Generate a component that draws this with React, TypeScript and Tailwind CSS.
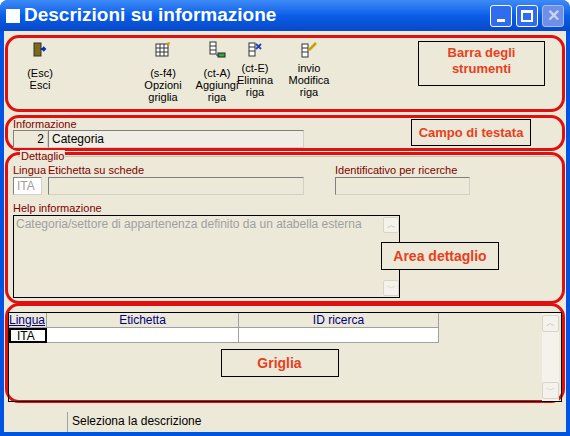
import React from 'react'

const font = { fontFamily: '"Liberation Sans", Arial, sans-serif' }

function Note({ text, className }: { text: string; className: string }) {
  return (
    <div className={`flex items-center justify-center border border-black bg-[#ece9d8] text-center text-[13px] font-bold leading-[16px] text-[#e8401c] ${className}`}>
      {text}
    </div>
  )
}

function Field({ className, children }: { className: string; children?: React.ReactNode }) {
  return (
    <div className={`h-[18px] border border-t-[#808080] border-l-[#808080] border-r-[#d4d0c8] border-b-[#d4d0c8] bg-[#ece9d8] px-[3px] text-[12px] leading-[16px] ${className}`}>
      {children}
    </div>
  )
}

function Tool({ icon, lines, className, gap }: { icon: React.ReactNode; lines: string[]; className: string; gap: string }) {
  return (
    <div className={`flex flex-col items-center ${className}`}>
      <div className="h-[18px] w-[18px]">{icon}</div>
      <div className={`text-center text-[11px] leading-[12px] text-black ${gap}`}>
        {lines.map((l) => (
          <div key={l}>{l}</div>
        ))}
      </div>
    </div>
  )
}

const Door = (
  <svg viewBox="0 0 18 18" className="h-[18px] w-[18px]">
    <rect x="3" y="2" width="7" height="13" fill="#7a6a1a" stroke="#333" strokeWidth="1" />
    <path d="M10 8h4M12 6l2 2-2 2" stroke="#0030c0" strokeWidth="2" fill="none" />
  </svg>
)
const Grid = (
  <svg viewBox="0 0 18 18" className="h-[18px] w-[18px]">
    <rect x="2" y="3" width="12" height="12" fill="#fff" stroke="#333" />
    <path d="M2 7h12M2 11h12M6 3v12M10 3v12" stroke="#333" />
    <path d="M12 2l4 -1-1 4z" fill="#c8a000" />
  </svg>
)
const Add = (
  <svg viewBox="0 0 18 18" className="h-[18px] w-[18px]">
    <rect x="2" y="1" width="6" height="12" fill="#fff" stroke="#333" />
    <path d="M2 5h6M2 9h6" stroke="#333" />
    <rect x="10" y="12" width="7" height="4" fill="#3a3" stroke="#222" />
    <path d="M8 14h3" stroke="#0030c0" />
  </svg>
)
const Del = (
  <svg viewBox="0 0 18 18" className="h-[18px] w-[18px]">
    <rect x="3" y="2" width="6" height="13" fill="#fff" stroke="#333" />
    <path d="M3 6h6M3 10h6" stroke="#333" />
    <path d="M10 3l5 5M15 3l-5 5" stroke="#2040c0" strokeWidth="1.8" />
  </svg>
)
const Edit = (
  <svg viewBox="0 0 18 18" className="h-[18px] w-[18px]">
    <rect x="2" y="3" width="6" height="13" fill="#fff" stroke="#333" />
    <path d="M2 7h6M2 11h6" stroke="#333" />
    <path d="M9 9l7-7" stroke="#c8a000" strokeWidth="2.5" />
  </svg>
)

export default function App() {
  return (
    <div style={font} className="h-[436px] w-[570px] overflow-hidden rounded-t-[8px] bg-[#0054e3]">
      <div className="flex h-[31px] items-center bg-gradient-to-b from-[#3d8bf7] via-[#0a5ee8] to-[#0848c8] px-[6px]">
        <div className="mr-[4px] h-[14px] w-[14px] bg-white" />
        <div className="text-[19px] font-bold text-white">Descrizioni su informazione</div>
        <div className="ml-auto flex gap-[4px]">
          <div className="flex h-[22px] w-[22px] items-end justify-center rounded-[3px] border border-white bg-[#2f6cf0] pb-[4px]"><div className="h-[3px] w-[8px] bg-white" /></div>
          <div className="flex h-[22px] w-[22px] items-center justify-center rounded-[3px] border border-white bg-[#2f6cf0]"><div className="h-[12px] w-[12px] border-2 border-t-[3px] border-white" /></div>
          <div className="flex h-[22px] w-[22px] items-center justify-center rounded-[3px] border border-[#a8bef0] bg-[#6e8ee8] text-[16px] font-bold text-[#c8d4f4]">✕</div>
        </div>
      </div>
      <div className="mx-[4px] flex h-[401px] flex-col bg-[#ece9d8] pt-[4px]">
        {/* toolbar */}
        <div className="mx-[1px] flex h-[77px] rounded-[14px] border-[3px] border-[#e01010] pt-[3px]">
          <Tool icon={Door} lines={['(Esc)', 'Esci']} gap="mt-[8px]" className="ml-[17px] w-[30px]" />
          <Tool icon={Grid} lines={['(s-f4)', 'Opzioni', 'griglia']} gap="mt-[8px]" className="ml-[83px] w-[50px]" />
          <Tool icon={Add} lines={['(ct-A)', 'Aggiungi', 'riga']} gap="mt-[8px]" className="ml-[4px] w-[50px]" />
          <Tool icon={Del} lines={['(ct-E)', 'Elimina', 'riga']} gap="mt-[3px]" className="ml-[-12px] w-[50px]" />
          <Tool icon={Edit} lines={['invio', 'Modifica', 'riga']} gap="mt-[3px]" className="ml-[4px] w-[50px]" />
          <Note text="Barra degli strumenti" className="ml-[84px] h-[45px] w-[127px] items-start pt-[3px]" />
        </div>
        {/* header */}
        <div className="mx-[1px] mt-[3px] flex h-[36px] rounded-[14px] border-[3px] border-[#e01010] pl-[5px]">
          <div>
            <div className="text-[11px] leading-[12px] text-[#800000]">Informazione</div>
            <div className="flex">
              <Field className="w-[35px] text-right">2</Field>
              <Field className="w-[256px] bg-[#f0eee4]">Categoria</Field>
            </div>
          </div>
          <Note text="Campo di testata" className="ml-[107px] mt-[1px] h-[27px] w-[120px]" />
        </div>
        {/* detail */}
        <div className="mx-[1px] mt-[1px] h-[152px] rounded-[14px] border-[3px] border-[#e01010] pl-[5px] pt-[1px]">
          <div className="relative ml-[5px] mr-[6px] border-t border-[#c8c4b4]">
            <span className="absolute left-[2px] top-[-7px] bg-[#ece9d8] px-[1px] text-[11px] leading-[12px] text-[#800000]">Dettaglio</span>
          </div>
          <div className="mt-[6px] flex text-[11px] leading-[14px] text-[#800000]">
            <span className="w-[35px]">Lingua</span>
            <span className="w-[287px]">Etichetta su schede</span>
            <span>Identificativo per ricerche</span>
          </div>
          <div className="flex">
            <Field className="w-[29px] bg-white text-[#a0a0a0]">ITA</Field>
            <Field className="ml-[6px] w-[256px]" />
            <Field className="ml-[31px] w-[135px]" />
          </div>
          <div className="mt-[6px] text-[11px] leading-[14px] text-[#800000]">Help informazione</div>
          <div className="flex">
            <div className="flex h-[83px] w-[387px] border border-black bg-[#ece9d8] pl-[2px]">
              <div className="flex-1 text-[12px] leading-[16px] text-[#a0a0a0]">Categoria/settore di appartenenza definito da un atabella esterna</div>
              <div className="flex w-[16px] flex-col justify-between py-[1px]">
                <div className="h-[16px] rounded-[2px] border border-[#d8d4c8] bg-[#f4f2ea] text-center text-[9px] leading-[14px] text-[#b0b0b0]">︿</div>
                <div className="h-[16px] rounded-[2px] border border-[#d8d4c8] bg-[#f4f2ea] text-center text-[9px] leading-[14px] text-[#b0b0b0]">﹀</div>
              </div>
            </div>
            <Note text="Area dettaglio" className="ml-[-19px] mt-[27px] h-[28px] w-[118px] text-[14px]" />
          </div>
        </div>
        {/* grid */}
        <div className="mx-[1px] mt-[-1px] h-[100px] rounded-[14px] border-[3px] border-[#e01010] pt-[6px]">
          <div className="flex h-[90px] border border-black">
            <div className="flex-1">
              <div className="flex h-[15px] text-[12px] leading-[14px] text-[#000080]">
                <div className="w-[38px] border-r border-b border-[#a0a0a0] bg-[#ece9d8] underline">Lingua</div>
                <div className="w-[192px] border-r border-b border-[#a0a0a0] text-center">Etichetta</div>
                <div className="w-[200px] border-r border-b border-[#a0a0a0] text-center">ID ricerca</div>
              </div>
              <div className="flex h-[15px] text-[12px] leading-[12px]">
                <div className="w-[38px] border-2 border-black bg-white pl-[6px]">ITA</div>
                <div className="w-[192px] border-r border-b border-[#a0a0a0] bg-white" />
                <div className="w-[200px] border-r border-b border-[#a0a0a0] bg-white" />
              </div>
              <div className="flex justify-center">
                <Note text="Griglia" className="ml-[8px] mt-[6px] h-[28px] w-[118px] text-[14px]" />
              </div>
            </div>
            <div className="mr-[2px] flex w-[17px] flex-col justify-between bg-[#f4f2ea] py-[2px]">
              <div className="h-[17px] rounded-[2px] border border-[#d8d4c8] text-center text-[9px] leading-[15px] text-[#b0b0b0]">︿</div>
              <div className="h-[17px] rounded-[2px] border border-[#d8d4c8] text-center text-[9px] leading-[15px] text-[#b0b0b0]">﹀</div>
            </div>
          </div>
        </div>
        <div className="mt-auto flex h-[20px] text-[12px] leading-[18px]">
          <div className="w-[64px] border-r border-[#a0a0a0]" />
          <div className="pl-[4px]">Seleziona la descrizione</div>
        </div>
      </div>
    </div>
  )
}
